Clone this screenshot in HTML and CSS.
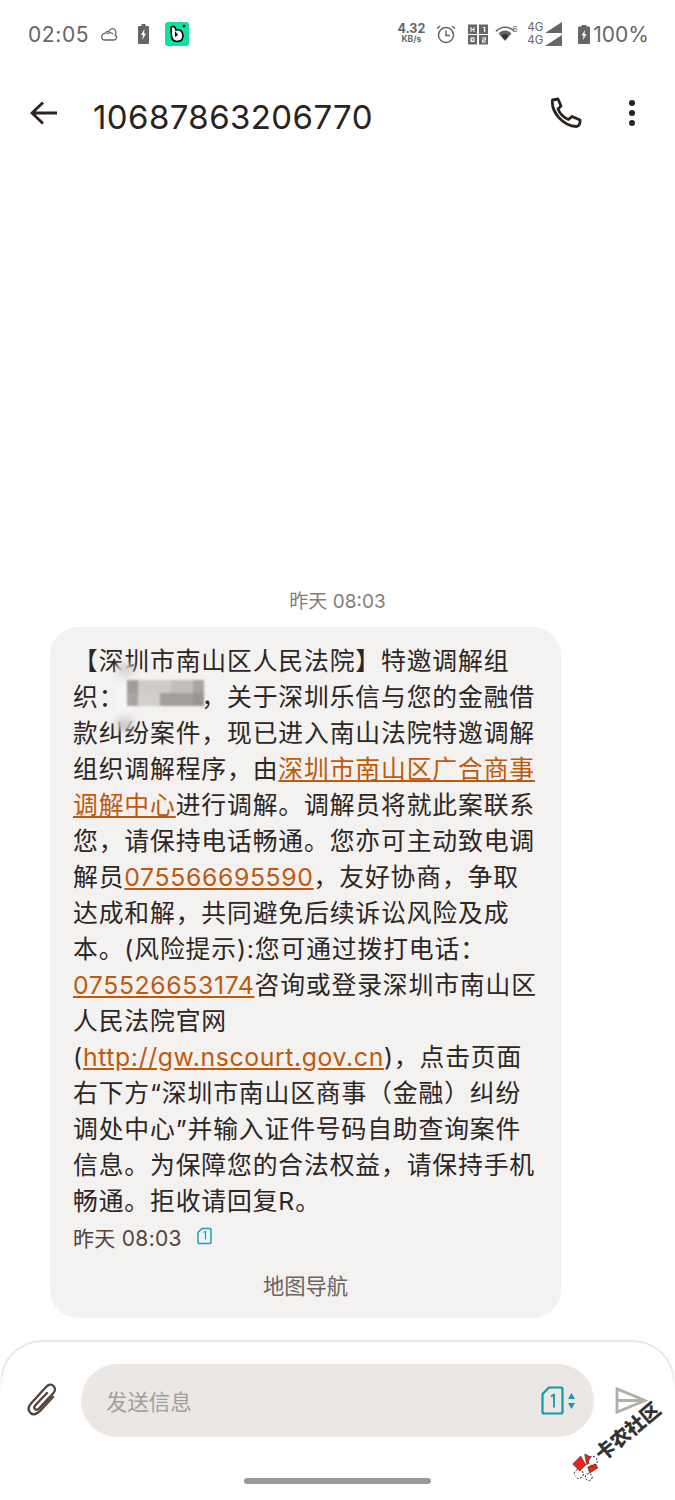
FILE: index.html
```html
<!DOCTYPE html>
<html lang="zh-CN">
<head>
    <meta charset="UTF-8">
    <meta name="viewport" content="width=device-width, initial-scale=1.0">
    <title>10687863206770</title>
    <link rel="stylesheet" href="styles.css">
</head>
<body>
    <div class="statusbar">
        <div class="status-left">
            <span class="clock">02:05</span>
            <svg class="ic-cloud" width="18" height="14" viewBox="0 0 18 14" fill="none" stroke="#666" stroke-width="1.3"><path d="M4 13h9a2.6 2.6 0 0 0 1-5 4 4 0 0 0-1-6 3.6 3.6 0 0 0-5 2.4A4 4 0 0 0 4 6.400a3.300 3.300 0 0 0 0 6.600zM6 7a4 4 0 0 1 6 0"/></svg>
            <svg class="ic-charge" width="11" height="20" viewBox="0 0 11 20"><path fill="#666" d="M3.500 0h4v2H10a1 1 0 0 1 1 1v16a1 1 0 0 1-1 1H1a1 1 0 0 1-1-1V3a1 1 0 0 1 1-1h2.500z"/><path fill="#fff" d="M6.500 5 3 11h2l-.7 5L8 9.500H6z"/></svg>
            <svg class="ic-app" width="24" height="24" viewBox="0 0 24 24"><rect width="24" height="24" rx="3" fill="#10e0a0"/><path fill="#fff" stroke="#000" stroke-width="1.600" d="M6 6c0-2 3-2 4-.5l1 2.500c4-1 7 1.500 7 5.500 0 4-2.500 6-6 6-4 0-5-2-5.500-5z"/><path d="M10 9v6l3-2z"/><circle cx="19" cy="4" r="1.300"/></svg>
        </div>
        <div class="status-right">
            <div class="netspeed"><b>4.32</b><small>KB/s</small></div>
            <svg class="ic-alarm" width="20" height="20" viewBox="0 0 20 20" fill="none" stroke="#666" stroke-width="1.500"><circle cx="10" cy="11" r="7.500"/><path d="M10 6.500V11.500H14M1 4.500 4 2M19 4.500 16 2"/></svg>
            <svg class="ic-hd" width="20" height="21" viewBox="0 0 20 20"><path fill="#666" fill-rule="evenodd" d="M0 0h9v9.500H0zM0 10.500h9V20H0zM11 0h9v9.500h-9zM11 10.500h9V20h-9zM2.500 2.500v5h1V5.500h2v2h1v-5h-1v2h-2v-2zM2.500 13v4.500h4V13zM3.700 14.200h1.600v2.100H3.700zM15 2.500v1h1v4h1.200v-5zM14 13v1h3v1h-3v3h4v-1h-3v-1h3v-3z"/></svg>
            <svg class="ic-wifi" width="24" height="20" viewBox="0 0 24 20"><path fill="none" stroke="#666" stroke-width="1.500" d="M1 7.500C6 2 14 2 19 7"/><path fill="#666" d="M3.500 9.500C7 5.500 13 5.500 16.500 9.500L10 17z"/><path fill="#333" d="M6.500 11.500c2-2 5-2 7 0L10 16z"/><text x="17.500" y="8" class="wifi-six">6</text></svg>
            <div class="signal">
                <div class="signal-row"><span>4G</span><svg width="17" height="11" viewBox="0 0 17 10" preserveAspectRatio="none"><path fill="#666" d="M17 0v10H0z"/></svg></div>
                <div class="signal-row"><span>4G</span><svg width="17" height="11" viewBox="0 0 17 10" preserveAspectRatio="none"><path fill="#666" d="M17 0v10H0z"/></svg></div>
            </div>
            <div class="battery">
                <svg width="12" height="19" viewBox="0 0 12 19"><path fill="#666" d="M3.500 0h5v1.500H11a1 1 0 0 1 1 1V18a1 1 0 0 1-1 1H1a1 1 0 0 1-1-1V2.500a1 1 0 0 1 1-1h2.500z"/><path fill="#fff" d="M7 5 3.500 10.500h2L5 15l3.500-6h-2z"/></svg>
                <span>100%</span>
            </div>
        </div>
    </div>

    <div class="appbar">
        <svg class="back" width="28" height="24" viewBox="0 0 28 24" fill="none" stroke="#2a2320" stroke-width="2.800"><path d="M2 12H27M13 1.500 2 12l11 10.500"/></svg>
        <h1>10687863206770</h1>
        <svg class="call" width="32" height="32" viewBox="0 0 32 32" fill="none" stroke="#2a2320" stroke-width="2.800" stroke-linejoin="round"><path d="M2.500 3 8 2l3 7-3 3c2 5 5.500 8.500 10.500 10.500l3.500-3 8 3.500c.5 3-1 6.500-3.500 6.500C13 29 1 15 2.500 3z"/></svg>
        <svg class="more" width="8" height="28" viewBox="0 0 8 28" fill="#2a2320"><circle cx="4" cy="4" r="3"/><circle cx="4" cy="14" r="3"/><circle cx="4" cy="24" r="3"/></svg>
    </div>

    <main class="thread">
        <div class="daystamp">昨天 08:03</div>
        <div class="bubble">
            <p class="msg">【深圳市南山区人民法院】特邀调解组<br>
            织：<span class="masked"><i class="blur"></i></span>，关于深圳乐信与您的金融借<br>
            款纠纷案件，现已进入南山法院特邀调解<br>
            组织调解程序，由<a href="#">深圳市南山区广合商事</a><br>
            <a href="#">调解中心</a>进行调解。调解员将就此案联系<br>
            您，请保持电话畅通。您亦可主动致电调<br>
            解员<a class="latin" href="#">075566695590</a>，友好协商，争取<br>
            达成和解，共同避免后续诉讼风险及成<br>
            本。(风险提示):您可通过拨打电话：<br>
            <a class="latin" href="#">075526653174</a>咨询或登录深圳市南山区<br>
            人民法院官网<br>
            (<a class="latin" href="#">http://gw.nscourt.gov.cn</a>)，点击页面<br>
            右下方“深圳市南山区商事（金融）纠纷<br>
            调处中心”并输入证件号码自助查询案件<br>
            信息。为保障您的合法权益，请保持手机<br>
            畅通。拒收请回复R。</p>
            <div class="meta">
                <span>昨天 08:03</span>
                <svg width="15" height="18" viewBox="0 0 15 17" fill="none" stroke="#1b9fb3" stroke-width="1.500"><path d="M5 1h8a1 1 0 0 1 1 1v13a1 1 0 0 1-1 1H2a1 1 0 0 1-1-1V5z"/><path stroke-width="1.200" d="M6.500 5 8.500 4v8"/></svg>
            </div>
            <div class="nav-link">地图导航</div>
        </div>
    </main>

    <div class="compose">
        <svg class="clip" width="32" height="36" viewBox="0 0 32 36" fill="none" stroke="#54453c" stroke-width="2.400" stroke-linecap="round"><path d="M27 15 14 29c-3.500 3.500-7 4-9.500 2C2 28.500 2 25 5 21.500L20 5c2.500-2.500 5.500-3 7.500-1S29.500 9 27 11.500L13 26.500c-1.500 1.500-3 1.500-4 .5s-1-2.500.5-4L21 11"/></svg>
        <div class="input-pill">
            <span class="placeholder">发送信息</span>
            <div class="sim-picker">
                <svg width="23" height="29" viewBox="0 0 23 29" fill="none" stroke="#1199ab" stroke-width="2.200" stroke-linejoin="round"><path d="M8 1.500h12a1.500 1.500 0 0 1 1.500 1.500v23a1.500 1.500 0 0 1-1.500 1.500H3A1.500 1.500 0 0 1 1.500 26V8z"/><path stroke-width="1.800" d="M10 10.500 13 8.500v13"/></svg>
                <svg width="7" height="16" viewBox="0 0 7 16" fill="#1199ab"><path d="M3.500 0 7 6H0zM3.500 16 0 10h7z"/></svg>
            </div>
        </div>
        <svg class="send" width="33" height="27" viewBox="0 0 34 28" fill="none" stroke="#b2aeaa" stroke-width="3"><path d="M2 2 31 14 2 26zM2 14H31"/></svg>
    </div>

    <div class="homebar"><span></span></div>

    <div class="watermark">
        <svg width="28" height="28" viewBox="0 0 28 28"><g transform="rotate(40 14 14)"><circle cx="7" cy="21" r="4.500" fill="#fff" stroke="#222" stroke-dasharray="2 1.500"/><circle cx="17" cy="24" r="3.500" fill="#fff" stroke="#222" stroke-dasharray="2 1.500"/><circle cx="21" cy="8" r="4.500" fill="#fff" stroke="#222" stroke-dasharray="2 1.500"/><path fill="#e4281f" stroke="#300" stroke-width=".5" d="M1 11 9 3l5 9-6 6zM13 1l6 3-4 8zM16 14l8-3 2 4-8 5z"/></g></svg>
        <span>卡农社区</span>
    </div>
</body>
</html>
```

FILE: styles.css
```css
* {
    box-sizing: border-box;
}
body {
    position: relative;
    display: flex;
    flex-direction: column;
    width: 675px;
    height: 1500px;
    margin: 0;
    overflow: hidden;
    background-color: #fff;
    font-family: "Inter", "Noto Sans CJK SC", sans-serif;
}
.statusbar {
    display: flex;
    justify-content: space-between;
    align-items: center;
    height: 68px;
    padding: 0 26px 0 28px;
    color: #666;
}
.status-left, .status-right {
    display: flex;
    align-items: center;
}
.clock {
    font-size: 21px;
    letter-spacing: 0.6px;
    margin-right: 12px;
}
.ic-cloud {
    margin-right: 19px;
}
.ic-charge {
    margin-right: 16px;
}
.netspeed {
    display: flex;
    flex-direction: column;
    align-items: center;
    margin-right: 11px;
    line-height: 10px;
}
.netspeed b {
    font-size: 12.5px;
}
.netspeed small {
    font-size: 8.5px;
    font-weight: 700;
}
.ic-alarm {
    margin-right: 12px;
}
.ic-hd {
    margin-right: 7px;
}
.ic-wifi {
    margin-right: 8px;
}
.wifi-six {
    font-size: 8px;
    fill: #666;
}
.signal {
    display: flex;
    flex-direction: column;
    gap: 2px;
    margin-right: 16px;
}
.signal-row {
    display: flex;
    align-items: center;
    gap: 2px;
    font-size: 11.5px;
    line-height: 11px;
}
.battery {
    display: flex;
    align-items: center;
    gap: 3px;
    font-size: 21px;
}
.appbar {
    display: flex;
    align-items: center;
    height: 90px;
    padding-left: 30px;
    color: #2a2320;
}
.back {
    margin-right: 35px;
}
.appbar h1 {
    flex: 1;
    margin: 0;
    padding-top: 8px;
    font-size: 33px;
    font-weight: 400;
    letter-spacing: 0.4px;
}
.call {
    margin-right: 46px;
}
.more {
    margin-right: 39px;
}
.thread {
    flex: 1;
    display: flex;
    flex-direction: column;
    justify-content: flex-end;
    padding: 0 0 22px 50px;
}
.daystamp {
    margin-bottom: 13px;
    padding-right: 50px;
    text-align: center;
    color: #837c77;
    font-size: 19px;
    line-height: 24px;
}
.bubble {
    width: 511px;
    height: 691px;
    padding: 16px 23px 0;
    border-radius: 28px;
    background-color: #f3f2f1;
}
.msg {
    margin: 0;
    font-size: 24.8px;
    letter-spacing: 0.87px;
    line-height: 36px;
    white-space: nowrap;
    color: #2d2622;
}
.msg a {
    color: #bf5a0c;
}
.msg a.latin {
    letter-spacing: 0.62px;
}
.masked {
    position: relative;
    display: inline-block;
    width: 77px;
    height: 20px;
}
/* smear left by the censor brush, sits behind the mosaic */
.masked::before {
    content: "";
    position: absolute;
    top: -22px;
    left: -7px;
    width: 16px;
    height: 66px;
    background: linear-gradient(#c8c5c2, #f7f6f5 28% 72%, #bcb9b6);
    filter: blur(3px);
}
.blur {
    position: absolute;
    top: -6px;
    left: 3px;
    width: 77px;
    height: 26px;
    background:
        linear-gradient(90deg, #a19c99 0 11px, #cfcbc8 11px 44px, #c2bebb 44px 66px, #a9a5a2 66px 77px) top / 100% 50% no-repeat,
        linear-gradient(90deg, #aaa5a2 0 11px, #d2cfcc 11px 33px, #a39e9b 33px 66px, #9b9693 66px 77px) bottom / 100% 50% no-repeat;
    filter: blur(1px);
}
.meta {
    display: flex;
    align-items: flex-start;
    gap: 15px;
    margin-top: 5px;
    color: #54453c;
    font-size: 21px;
    letter-spacing: 0.3px;
    line-height: 30px;
}
.meta svg {
    margin-top: 3px;
}
.nav-link {
    margin-top: 17px;
    text-align: center;
    color: #6d625b;
    font-size: 21.3px;
    line-height: 30px;
}
.compose {
    position: relative;
    display: flex;
    align-items: flex-start;
    height: 120px;
    padding: 24px 0 0 26px;
}
/* hairline only follows the top corners, it fades out down the sides */
.compose::before {
    content: "";
    position: absolute;
    top: 0;
    left: 0;
    right: 0;
    height: 50px;
    border: 2px solid #e8e8e8;
    border-bottom: 0;
    border-radius: 42px 42px 0 0;
    -webkit-mask-image: linear-gradient(#000 60%, transparent);
    mask-image: linear-gradient(#000 60%, transparent);
}
.clip {
    margin: 18px 23px 0 0;
}
.input-pill {
    display: flex;
    align-items: center;
    justify-content: space-between;
    width: 513px;
    height: 73px;
    padding: 0 19px 0 25px;
    border-radius: 37px;
    background-color: #eae7e5;
}
.placeholder {
    color: #a39e9a;
    font-size: 21.4px;
}
.sim-picker {
    display: flex;
    align-items: center;
    gap: 4px;
}
.send {
    margin: 23px 0 0 21px;
}
.homebar {
    display: flex;
    justify-content: center;
    height: 40px;
    padding-top: 18px;
}
.homebar span {
    width: 187px;
    height: 6px;
    border-radius: 3px;
    background-color: #999;
}
/* forum stamp sits on top of the screenshot */
.watermark {
    position: absolute;
    left: 575px;
    top: 1462px;
    display: flex;
    align-items: center;
    gap: 2px;
    transform: rotate(-40deg);
    transform-origin: left center;
    color: #333;
    font-size: 19.5px;
    font-weight: 900;
    line-height: 28px;
    white-space: nowrap;
}
```
